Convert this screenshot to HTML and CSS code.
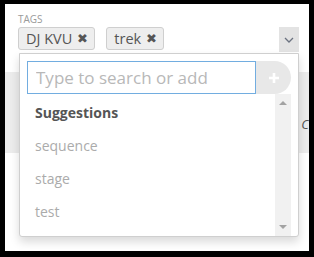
FILE: index.html
```html
<!DOCTYPE html>
<html>
<head>
<meta charset="utf-8">
<link rel="stylesheet" href="styles.css">
</head>
<body>
<div class="panel">
  <div class="field">
    <div class="label">TAGS</div>
    <div class="control">
      <div class="chips">
        <span class="chip">DJ KVU<span class="x">&#x2716;</span></span>
        <span class="chip">trek<span class="x">&#x2716;</span></span>
      </div>
      <div class="toggle">
        <svg width="10" height="6" viewBox="0 0 10 6"><path d="M1 1 L5 5 L9 1" fill="none" stroke="#6b7280" stroke-width="1.3"/></svg>
      </div>
    </div>
    <div class="dropdown">
      <div class="search-row">
        <input class="search" type="text" placeholder="Type to search or add">
        <div class="add">
          <svg width="10" height="10" viewBox="0 0 10 10"><path d="M5 0 V10 M0 5 H10" stroke="#fff" stroke-width="2.6"/></svg>
        </div>
      </div>
      <div class="list-wrap">
        <ul class="list">
          <li class="head">Suggestions</li>
          <li>sequence</li>
          <li>stage</li>
          <li>test</li>
        </ul>
        <div class="scrollbar">
          <svg width="8" height="4" viewBox="0 0 8 4"><path d="M0 4 L4 0 L8 4Z" fill="#a3a3a3"/></svg>
          <svg width="8" height="4" viewBox="0 0 8 4"><path d="M0 0 L4 4 L8 0Z" fill="#a3a3a3"/></svg>
        </div>
      </div>
    </div>
  </div>
  <div class="band"><span class="band-text">C</span></div>
</div>
</body>
</html>
```

FILE: styles.css
```css
html, body {
  margin: 0;
  padding: 0;
  background: #000;
}
body {
  width: 314px;
  height: 257px;
  padding-top: 4px;
  padding-left: 5px;
  box-sizing: border-box;
  font-family: "Open Sans", "Liberation Sans", sans-serif;
}
.panel {
  width: 304px;
  height: 247px;
  background: #fff;
  position: relative;
  overflow: hidden;
}
.field {
  position: relative;
  padding: 9px 10px 0 13px;
}
.label {
  font-size: 10px;
  line-height: 13px;
  color: #9a9a9a;
}
.control {
  display: flex;
  justify-content: space-between;
  align-items: flex-start;
  margin-top: 1px;
}
.chips {
  display: flex;
  gap: 11px;
}
.chip {
  display: inline-block;
  height: 23px;
  box-sizing: border-box;
  border: 1px solid #cfcfcf;
  border-radius: 3px;
  background: #eeeeee;
  color: #555;
  font-size: 14.5px;
  line-height: 21px;
  padding: 0 6px 0 7px;
}
.x {
  font-size: 12.5px;
  color: #555;
  margin-left: 5px;
  vertical-align: 1px;
}
.toggle {
  width: 20px;
  height: 25px;
  background: #e3e3e3;
  display: flex;
  align-items: center;
  justify-content: center;
}
.dropdown {
  position: absolute;
  left: 14px;
  top: 49px;
  width: 280px;
  height: 184px;
  box-sizing: border-box;
  background: #fff;
  border: 1px solid #cfcfcf;
  border-radius: 0 0 3px 3px;
  box-shadow: 0 5px 10px rgba(0,0,0,0.15);
  z-index: 2;
  padding: 7px 7px 0 7px;
}
.search-row {
  display: flex;
  height: 33px;
}
.search {
  width: 229px;
  height: 33px;
  box-sizing: border-box;
  border: 1px solid #72ade0;
  outline: none;
  margin: 0;
  padding: 0 8px;
  font-family: "Open Sans", "Liberation Sans", sans-serif;
  font-size: 17px;
  color: #555;
}
.search::placeholder {
  color: #b8b8b8;
}
.add {
  width: 35px;
  height: 33px;
  background: #e8e8e8;
  border-radius: 0 17px 17px 0;
  display: flex;
  align-items: center;
  justify-content: center;
}
.list-wrap {
  display: flex;
  height: 142px;
}
.list {
  flex: 1;
  list-style: none;
  margin: 0;
  padding: 2px 0 0 8px;
}
.list li {
  height: 33px;
  line-height: 33px;
  font-size: 14px;
  color: #ababab;
}
.list li.head {
  font-weight: 700;
  color: #555;
}
.scrollbar {
  width: 16px;
  background: #f1f1f1;
  display: flex;
  flex-direction: column;
  justify-content: space-between;
  align-items: center;
  padding: 7px 0 7px;
  box-sizing: border-box;
}
.band {
  margin-top: 20px;
  height: 81px;
  background: #ececec;
  position: relative;
}
.band-text {
  position: absolute;
  right: 0;
  top: 44px;
  font-size: 13px;
  line-height: 16px;
  color: #555;
  font-style: italic;
}
```
